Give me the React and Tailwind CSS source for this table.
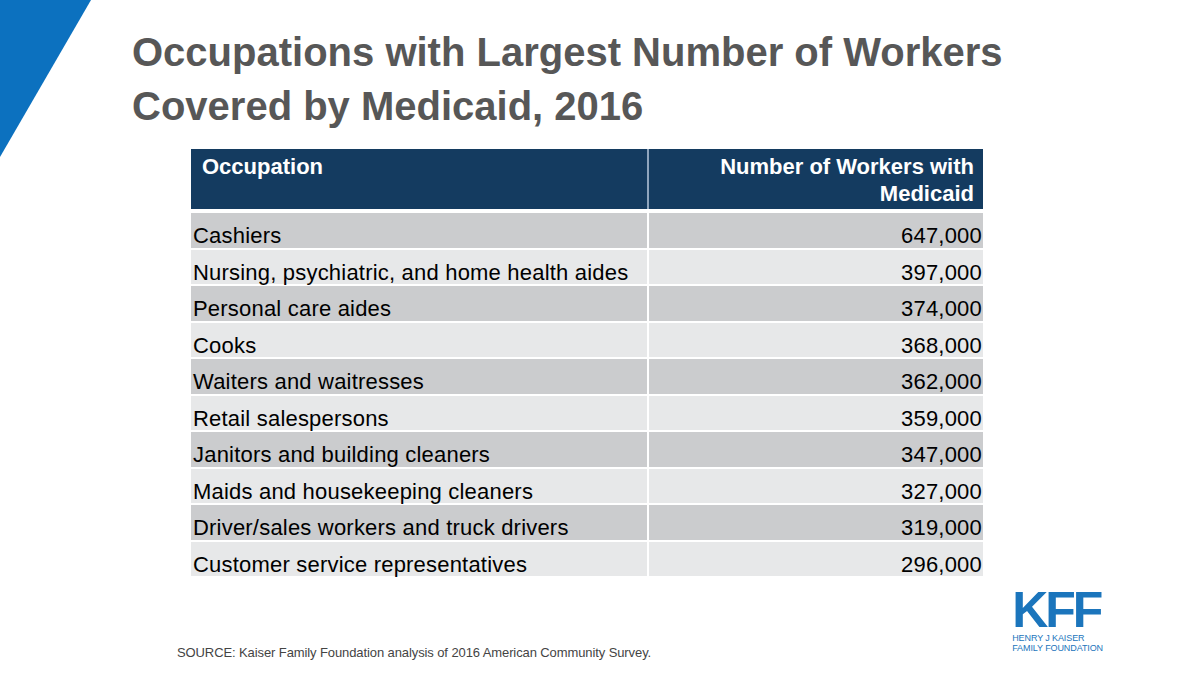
import React from "react";

const rows = [
  ["Cashiers", "647,000"],
  ["Nursing, psychiatric, and home health aides", "397,000"],
  ["Personal care aides", "374,000"],
  ["Cooks", "368,000"],
  ["Waiters and waitresses", "362,000"],
  ["Retail salespersons", "359,000"],
  ["Janitors and building cleaners", "347,000"],
  ["Maids and housekeeping cleaners", "327,000"],
  ["Driver/sales workers and truck drivers", "319,000"],
  ["Customer service representatives", "296,000"],
];

const Corner = () => (
  <svg className="absolute top-0 left-0" width="92" height="160" viewBox="0 0 92 160">
    <polygon points="0,0 91,0 0,157" fill="#0c71bf" />
  </svg>
);

const KffLogo = () => (
  <div className="flex flex-col text-[#1b75bc] font-['Liberation_Sans',Arial,sans-serif]">
    <div className="h-[38px] text-[50px] leading-[38px] font-black tracking-[-3px]">KFF</div>
    <div className="mt-[4px] text-[9px] leading-[10px] tracking-[-0.1px]">HENRY J KAISER</div>
    <div className="text-[9px] leading-[10px] tracking-[-0.1px]">FAMILY FOUNDATION</div>
  </div>
);

export default function App() {
  return (
    <main className="relative w-[1200px] h-[675px] bg-white overflow-hidden font-['Liberation_Sans',Arial,sans-serif]">
      <Corner />

      {/* Title */}
      <h1 className="pl-[132px] pt-[25px] text-[40px] leading-[54px] font-bold text-[#575757]">
        Occupations with Largest Number of Workers
        <br />
        Covered by Medicaid, 2016
      </h1>

      {/* Table */}
      <div className="ml-[191px] mt-[16px] w-[792px]">
        <div className="grid grid-cols-[456px_336px] h-[60px] bg-[#143b60] text-white text-[22px] font-bold leading-[27px]">
          <div className="pl-[11px] pt-[4px]">Occupation</div>
          <div className="border-l-2 border-[#8fa5bd] pr-[9px] pt-[4px] text-right">
            Number of Workers with
            <br />
            Medicaid
          </div>
        </div>
        <div className="mt-[4px] flex flex-col gap-[2px] text-black text-[22px] tracking-[0.2px]">
          {rows.map(([name, count], i) => (
            <div
              key={name}
              className={
                "grid grid-cols-[456px_336px] h-[34.5px] " +
                (i % 2 === 0 ? "bg-[#cbccce]" : "bg-[#e7e8e9]")
              }
            >
              <div className="pl-[2px] pt-[12px] leading-[22px] whitespace-nowrap">{name}</div>
              <div className="border-l-2 border-white pr-[1px] pt-[12px] leading-[22px] text-right">
                {count}
              </div>
            </div>
          ))}
        </div>
      </div>

      {/* Footer */}
      <div className="mt-[15px] flex justify-between pl-[177px] pr-[97px]">
        <p className="mt-[54px] text-[13px] leading-[16px] tracking-[-0.1px] text-[#444444]">
          SOURCE: Kaiser Family Foundation analysis of 2016 American Community Survey.
        </p>
        <KffLogo />
      </div>
    </main>
  );
}
